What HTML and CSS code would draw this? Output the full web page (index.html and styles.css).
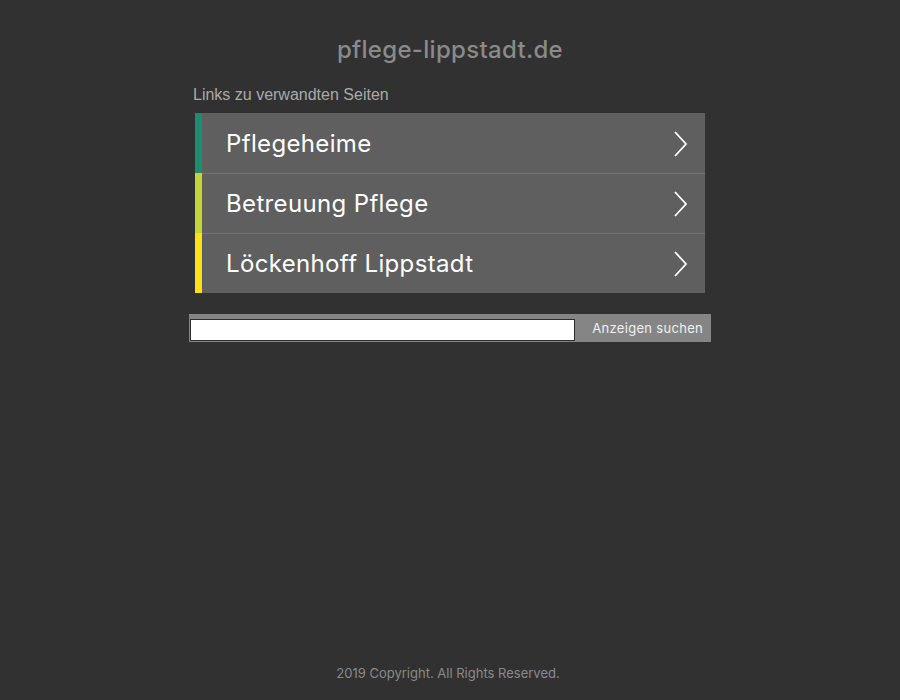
FILE: index.html
```html
<!DOCTYPE html>
<html lang="de">
<head>
<meta charset="utf-8">
<title>pflege-lippstadt.de</title>
<link rel="stylesheet" href="styles.css">
</head>
<body>
<div class="page">
  <header class="head">
    <h1 class="title">pflege-lippstadt.de</h1>
  </header>
  <main class="main">
    <div class="label">Links zu verwandten Seiten</div>
    <ul class="links">
      <li class="link c1"><span class="bar"></span><span class="text">Pflegeheime</span><svg class="chev" viewBox="0 0 20 28" width="20" height="28"><polyline points="5,2 16,14 5,26" fill="none" stroke="#fff" stroke-width="1.8"/></svg></li>
      <li class="link c2"><span class="bar"></span><span class="text">Betreuung Pflege</span><svg class="chev" viewBox="0 0 20 28" width="20" height="28"><polyline points="5,2 16,14 5,26" fill="none" stroke="#fff" stroke-width="1.8"/></svg></li>
      <li class="link c3"><span class="bar"></span><span class="text">Löckenhoff Lippstadt</span><svg class="chev" viewBox="0 0 20 28" width="20" height="28"><polyline points="5,2 16,14 5,26" fill="none" stroke="#fff" stroke-width="1.8"/></svg></li>
    </ul>
    <form class="search">
      <input class="field" type="text">
      <button class="btn" type="button">Anzeigen suchen</button>
    </form>
  </main>
  <footer class="foot">2019 Copyright. All Rights Reserved.</footer>
</div>
</body>
</html>
```
FILE: styles.css
```css
html, body {
  margin: 0;
  padding: 0;
  background: #313131;
}
.page {
  height: 700px;
  display: flex;
  flex-direction: column;
  align-items: center;
}
.head {
  padding-top: 34px;
  height: 50px;
}
.title {
  margin: 0;
  font-family: Inter, "Open Sans", sans-serif;
  font-weight: 500;
  font-size: 24px;
  letter-spacing: 0.3px;
  line-height: 32px;
  color: #8a8a8a;
  text-align: center;
}
.main {
  width: 510px;
  display: flex;
  flex-direction: column;
}
.label {
  font-family: "Liberation Sans", Arial, sans-serif;
  font-size: 16px;
  color: #aaaaaa;
  margin-left: -2px;
  height: 29px;
  line-height: 22px;
}
.links {
  list-style: none;
  margin: 0;
  padding: 0;
}
.link {
  display: flex;
  align-items: center;
  height: 59px;
  background: #5f5f5f;
  border-top: 1px solid #737373;
}
.link:first-child {
  border-top: 1px solid #5f5f5f;
}
.bar {
  width: 7px;
  align-self: stretch;
  margin-top: -1px;
}
.c1 .bar { background: #1e8c6e; }
.c2 .bar { background: #c2d534; }
.c3 .bar { background: #ffdf17; }
.text {
  flex: 1;
  padding-left: 24px;
  font-family: Inter, "Open Sans", sans-serif;
  font-size: 24px;
  letter-spacing: 0.35px;
  color: #ffffff;
}
.chev {
  margin-right: 15px;
  display: block;
}
.search {
  margin: 21px -6px 0;
  height: 28px;
  background: #858585;
  display: flex;
  align-items: flex-end;
  padding: 0 0 1px 1px;
  box-sizing: border-box;
}
.field {
  width: 385px;
  height: 22px;
  box-sizing: border-box;
  border: 1px solid #2e2e2e;
  background: #fff;
  margin: 0;
  padding: 0;
}
.btn {
  flex: 1;
  align-self: stretch;
  background: transparent;
  border: 0;
  font-family: Inter, "Open Sans", sans-serif;
  font-size: 13px;
  letter-spacing: 0.3px;
  color: #f0f0f0;
  text-align: right;
  padding: 0 8px 0 0;
  margin-bottom: -1px;
}
.foot {
  margin-top: auto;
  padding-bottom: 19px;
  padding-right: 4px;
  font-family: Inter, "Open Sans", sans-serif;
  font-size: 13px;
  color: #8a8a8a;
}
```
